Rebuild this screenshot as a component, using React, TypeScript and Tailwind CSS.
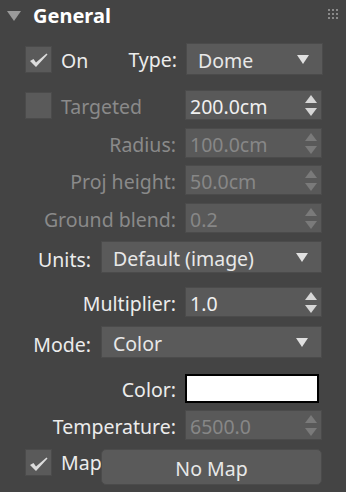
import React from 'react';

// Colour set for this dark rollout panel
const font = { fontFamily: '"Segoe UI", "Noto Sans", "Open Sans", sans-serif' };

function Check({ checked }: { checked: boolean }) {
  return (
    <div className="w-[27px] h-[27px] shrink-0 bg-[#5a5a5a] border border-[#4b4b4b] flex items-center justify-center">
      {checked && (
        <svg width="20" height="16" viewBox="0 0 20 16" className="mt-[2px]">
          <path d="M1 9 L4.5 7 L7 10.5 L17.5 1.5 L18.5 2.5 L7 15 Z" fill="#dcdcdc" />
        </svg>
      )}
    </div>
  );
}

function DropArrow() {
  return (
    <svg width="12" height="9" viewBox="0 0 12 9" className="shrink-0">
      <path d="M0 0 H12 L6 9 Z" fill="#e0e0e0" />
    </svg>
  );
}

function Spin({ disabled }: { disabled?: boolean }) {
  const c = disabled ? '#7a7a7a' : '#d6d6d6';
  return (
    <svg width="12" height="21" viewBox="0 0 12 21" className="shrink-0">
      <path d="M6 0 L12 8 H0 Z" fill={c} />
      <path d="M0 13 H12 L6 21 Z" fill={c} />
    </svg>
  );
}

// Spinner field: number + up/down arrows
function Spinner({ value, disabled }: { value: string; disabled?: boolean }) {
  return (
    <div className="w-[137px] h-[30px] bg-[#595959] border border-[#4b4b4b] flex items-center justify-between pl-[4px] pr-[4px]">
      <span className={`pt-[3px] ${disabled ? 'text-[#878787]' : 'text-[#f0f0f0]'}`}>{value}</span>
      <Spin disabled={disabled} />
    </div>
  );
}

function Dropdown({ value, width }: { value: string; width: string }) {
  return (
    <div className={`${width} h-[32px] bg-[#5a5a5a] border border-[#4b4b4b] flex items-center justify-between pl-[11px] pr-[13px]`}>
      <span className="pt-[3px] text-[#e8e8e8]">{value}</span>
      <DropArrow />
    </div>
  );
}

// label right-aligned ending at x=176, field starts at 185
function LabeledRow({ label, children, disabled, top }: { label: string; children: React.ReactNode; disabled?: boolean; top: string }) {
  return (
    <div className={`flex items-center ${top}`}>
      <div className={`w-[176px] pt-[3px] text-right whitespace-nowrap ${disabled ? 'text-[#8a8a8a]' : 'text-[#ececec]'}`}>{label}</div>
      <div className="ml-[9px]">{children}</div>
    </div>
  );
}

export default function App() {
  return (
    <div className="w-[346px] h-[492px] bg-[#444444] text-[19.5px] leading-none overflow-hidden" style={font}>
      {/* header */}
      <div className="h-[30px] flex items-center relative">
        <svg width="14" height="10" viewBox="0 0 14 10" className="ml-[7px] mt-[1px]">
          <path d="M0 0 H14 L7 10 Z" fill="#9a9a9a" />
        </svg>
        <span className="ml-[12px] pt-[2px] font-bold text-[20px] text-white">General</span>
        <div className="absolute right-[8px] top-[9px] grid grid-cols-3 gap-[2px]">
          {Array.from({ length: 9 }).map((_, i) => (
            <div key={i} className="w-[2px] h-[2px] bg-[#8a8a8a]" />
          ))}
        </div>
      </div>

      {/* On / Type */}
      <div className="flex items-center mt-[13px] h-[32px]">
        <div className="ml-[25px]"><Check checked /></div>
        <span className="ml-[9px] pt-[3px] w-[50px] text-[#ececec]">On</span>
        <span className="w-[66px] pt-[1px] text-right text-[#ececec]">Type:</span>
        <div className="ml-[9px]"><Dropdown value="Dome" width="w-[137px]" /></div>
      </div>

      {/* Targeted */}
      <div className="flex items-center mt-[15px] h-[30px]">
        <div className="ml-[25px]"><Check checked={false} /></div>
        <span className="ml-[9px] pt-[3px] w-[124px] text-[#8a8a8a]">Targeted</span>
        <Spinner value="200.0cm" />
      </div>

      <LabeledRow label="Radius:" disabled top="mt-[8px]">
        <Spinner value="100.0cm" disabled />
      </LabeledRow>
      <LabeledRow label="Proj height:" disabled top="mt-[7px]">
        <Spinner value="50.0cm" disabled />
      </LabeledRow>
      <LabeledRow label="Ground blend:" disabled top="mt-[8px]">
        <Spinner value="0.2" disabled />
      </LabeledRow>

      {/* Units */}
      <div className="flex items-center mt-[8px]">
        <span className="w-[91px] pt-[6px] text-right text-[#ececec]">Units:</span>
        <div className="ml-[10px]"><Dropdown value="Default (image)" width="w-[221px]" /></div>
      </div>

      <LabeledRow label="Multiplier:" top="mt-[14px]">
        <Spinner value="1.0" />
      </LabeledRow>

      {/* Mode */}
      <div className="flex items-center mt-[9px]">
        <span className="w-[91px] pt-[6px] text-right text-[#ececec]">Mode:</span>
        <div className="ml-[10px]"><Dropdown value="Color" width="w-[221px]" /></div>
      </div>

      <LabeledRow label="Color:" top="mt-[16px]">
        <div className="w-[134px] h-[29px] bg-white border-2 border-black" />
      </LabeledRow>

      <LabeledRow label="Temperature:" top="mt-[7px]">
        <Spinner value="6500.0" disabled />
      </LabeledRow>

      {/* Map */}
      <div className="flex items-center mt-[9px]">
        <div className="ml-[25px] self-start"><Check checked /></div>
        <span className="ml-[9px] w-[40px] text-[#ececec] self-start mt-[4px]">Map</span>
        <div className="w-[221px] h-[36px] pt-[3px] rounded-[5px] bg-[#5a5a5a] border border-[#4b4b4b] flex items-center justify-center text-[#e8e8e8]">
          No Map
        </div>
      </div>
    </div>
  );
}
